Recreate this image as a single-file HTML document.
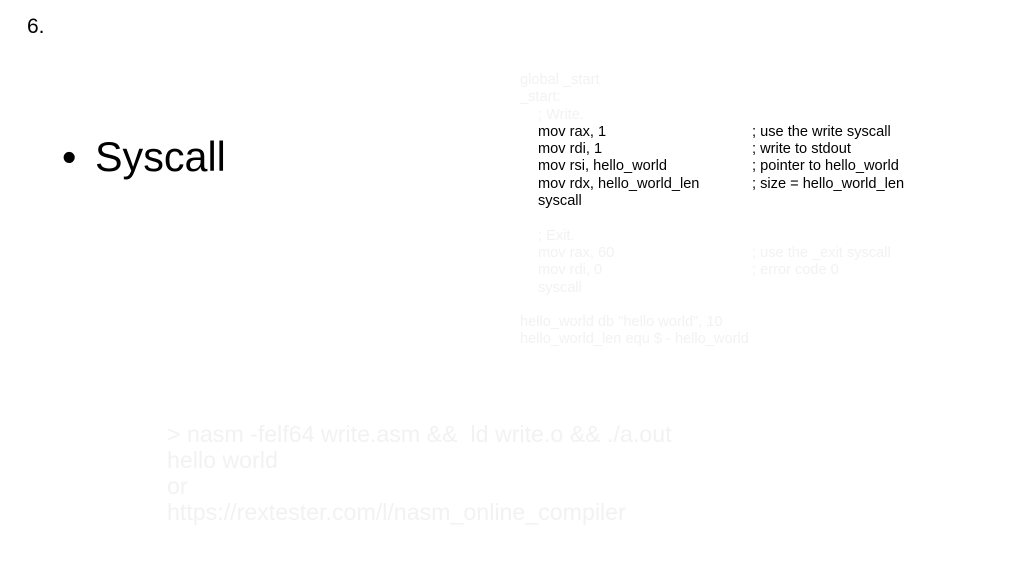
<!DOCTYPE html>
<html><head><style>
body{margin:0;width:1024px;height:576px;background:#fff;position:relative;overflow:hidden;font-family:"Liberation Sans",Arial,sans-serif;}
.a{position:absolute;white-space:pre;}
.code{position:absolute;left:520px;top:72px;font-size:14.6px;line-height:17.3px;color:#000;}
.code div{height:17.3px;white-space:pre;position:relative;}
.i{padding-left:18px;}
.f{color:#f2f2f2;}
.c{position:absolute;left:232px;}
.bot{position:absolute;left:167px;top:421px;font-size:23.2px;line-height:26px;color:#f2f2f2;white-space:pre;}
</style></head><body>
<div class="a" style="left:27px;top:15px;font-size:21px;">6.</div>
<div class="a" style="left:62px;top:134px;font-size:41px;">•</div>
<div class="a" style="left:95px;top:134px;font-size:41.3px;">Syscall</div>
<div class="code">
<div class="f">global _start</div>
<div class="f">_start:</div>
<div class="f i">; Write.</div>
<div class="i">mov rax, 1<span class="c">; use the write syscall</span></div>
<div class="i">mov rdi, 1<span class="c">; write to stdout</span></div>
<div class="i">mov rsi, hello_world<span class="c">; pointer to hello_world</span></div>
<div class="i">mov rdx, hello_world_len<span class="c">; size = hello_world_len</span></div>
<div class="i">syscall</div>
<div></div>
<div class="f i">; Exit.</div>
<div class="f i">mov rax, 60<span class="c">; use the _exit syscall</span></div>
<div class="f i">mov rdi, 0<span class="c">; error code 0</span></div>
<div class="f i">syscall</div>
<div></div>
<div class="f">hello_world db "hello world", 10</div>
<div class="f">hello_world_len equ $ - hello_world</div>
</div>
<div class="bot">&gt; nasm -felf64 write.asm &amp;&amp;  ld write.o &amp;&amp; ./a.out
hello world
or
https://rextester.com/l/nasm_online_compiler</div>
</body></html>
